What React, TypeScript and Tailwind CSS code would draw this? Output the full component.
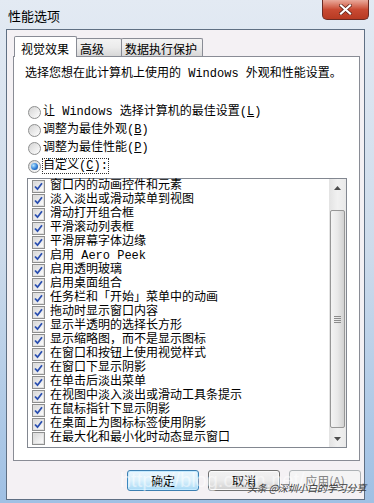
import React from 'react';

const items: [string, boolean][] = [
  ['窗口内的动画控件和元素', true],
  ['淡入淡出或滑动菜单到视图', true],
  ['滑动打开组合框', true],
  ['平滑滚动列表框', true],
  ['平滑屏幕字体边缘', true],
  ['启用 Aero Peek', true],
  ['启用透明玻璃', true],
  ['启用桌面组合', true],
  ['任务栏和「开始」菜单中的动画', true],
  ['拖动时显示窗口内容', true],
  ['显示半透明的选择长方形', true],
  ['显示缩略图，而不是显示图标', true],
  ['在窗口和按钮上使用视觉样式', true],
  ['在窗口下显示阴影', true],
  ['在单击后淡出菜单', true],
  ['在视图中淡入淡出或滑动工具条提示', true],
  ['在鼠标指针下显示阴影', true],
  ['在桌面上为图标标签使用阴影', true],
  ['在最大化和最小化时动态显示窗口', false],
];

function CheckBox({ checked }: { checked: boolean }) {
  return (
    <span className="w-[13px] h-[13px] shrink-0 border border-[#8e8f8f] bg-white flex items-center justify-center">
      <span className="w-[11px] h-[11px] border border-[#e0e0e0] bg-gradient-to-br from-[#d9d9d9] to-[#fbfbfb] flex items-center justify-center">
        {checked && (
          <svg width="9" height="9" viewBox="0 0 9 9">
            <path d="M1 4.5 L3.5 7.2 L8 1.2" fill="none" stroke="#2a4fb0" strokeWidth="1.8" />
          </svg>
        )}
      </span>
    </span>
  );
}

function Radio({ on }: { on?: boolean }) {
  return (
    <span className="w-[13px] h-[13px] shrink-0 rounded-full border border-[#8e8f8f] bg-gradient-to-br from-[#d4d4d4] to-white flex items-center justify-center">
      {on && <span className="w-[7px] h-[7px] rounded-full bg-[radial-gradient(circle_at_35%_35%,#b8e6ff,#2f7fd8_55%,#0d3d86)]" />}
    </span>
  );
}

function Mnemonic({ k }: { k: string }) {
  return (
    <span>
      (<span className="underline">{k}</span>)
    </span>
  );
}

export default function App() {
  return (
    <div className="relative w-[374px] h-[503px] overflow-hidden flex flex-col bg-gradient-to-b from-[#e3eaf3] via-[#cddbeb] to-[#9fc0e4] font-['Liberation_Mono','Noto_Sans_CJK_SC',monospace] text-[12px] leading-[14px] text-black">
      {/* title bar */}
      <div className="h-[29px] flex items-start shrink-0">
        <div className="pl-[8px] pt-[8px] text-[13px] leading-[15px] font-['Noto_Sans_CJK_SC',sans-serif]">性能选项</div>
        <button className="ml-auto mr-[5px] w-[47px] h-[20px] rounded-b-[5px] border border-t-0 border-[#6b2b24] bg-gradient-to-b from-[#e9a99b] via-[#c94a33] to-[#b73a22] flex items-center justify-center">
          <svg width="13" height="11" viewBox="0 0 13 11">
            <path d="M2 1.5 L11 9.5 M11 1.5 L2 9.5" stroke="#5a1e14" strokeWidth="3.6" strokeLinecap="square" />
            <path d="M2 1.5 L11 9.5 M11 1.5 L2 9.5" stroke="#ffffff" strokeWidth="2.2" strokeLinecap="square" />
          </svg>
        </button>
      </div>

      {/* client area */}
      <div className="ml-[6px] mr-[9px] mb-[3px] flex-1 border border-[#5f6f83] bg-[#f4f1f4] flex flex-col">
        {/* tabs */}
        <div className="pt-[6px] pl-[7px] flex items-end relative z-10">
          <div className="w-[63px] h-[21px] -mb-px bg-white border border-b-0 border-[#898c95] rounded-t-[2px] pl-[6px] pt-[5px] font-['Noto_Sans_CJK_SC',sans-serif]">视觉效果</div>
          <div className="w-[46px] h-[18px] -ml-px border border-b-0 border-[#898c95] rounded-t-[2px] bg-gradient-to-b from-[#f3f3f3] via-[#ebebeb] to-[#d7d7d7] pl-[3px] pt-[3px] font-['Noto_Sans_CJK_SC',sans-serif]">高级</div>
          <div className="w-[82px] h-[18px] -ml-px border border-b-0 border-[#898c95] rounded-t-[2px] bg-gradient-to-b from-[#f3f3f3] via-[#ebebeb] to-[#d7d7d7] pl-[3px] pt-[3px] font-['Noto_Sans_CJK_SC',sans-serif]">数据执行保护</div>
        </div>

        {/* tab panel */}
        <div className="ml-[6px] mr-[4px] h-[405px] border border-[#898c95] bg-white flex flex-col">
          <div className="pl-[11px] pt-[10px]">选择您想在此计算机上使用的 Windows 外观和性能设置。</div>

          <div className="mt-[24px] pl-[14px] flex flex-col gap-[4px]">
            <div className="h-[14px] flex items-center gap-[2px]">
              <Radio />
              <span>让 Windows 选择计算机的最佳设置<Mnemonic k="L" /></span>
            </div>
            <div className="h-[14px] flex items-center gap-[2px]">
              <Radio />
              <span>调整为最佳外观<Mnemonic k="B" /></span>
            </div>
            <div className="h-[14px] flex items-center gap-[2px]">
              <Radio />
              <span>调整为最佳性能<Mnemonic k="P" /></span>
            </div>
            <div className="h-[14px] flex items-center gap-[2px]">
              <Radio on />
              <span className="outline outline-1 outline-dotted outline-[#333]">自定义<Mnemonic k="C" />:</span>
            </div>
          </div>

          {/* list */}
          <div className="mt-[5px] ml-[13px] mr-[12px] h-[270px] border border-[#828790] bg-white flex">
            <div className="flex-1 pl-[4px] flex flex-col">
              {items.map(([label, checked], i) => (
                <div key={i} className="h-[14px] flex items-center gap-[5px] shrink-0">
                  <CheckBox checked={checked} />
                  <span className="whitespace-nowrap">{label}</span>
                </div>
              ))}
            </div>
            {/* scrollbar */}
            <div className="w-[17px] flex flex-col bg-gradient-to-r from-[#e3e3e3] via-[#f1f1f1] to-[#e9e9e9]">
              <div className="h-[17px] flex items-center justify-center">
                <svg width="7" height="4" viewBox="0 0 7 4"><path d="M0 4 L3.5 0 L7 4 Z" fill="#4d4d4d" /></svg>
              </div>
              <div className="flex-1 pt-[14px] pb-[2px] px-[1px] flex">
                <div className="flex-1 rounded-[2px] border border-[#979797] bg-gradient-to-r from-[#f4f4f4] via-[#e9e9e9] to-[#d2d2d2] flex items-center justify-center">
                  <div className="w-[7px] flex flex-col gap-[1px]">
                    <div className="h-px bg-[#8c8c8c]" />
                    <div className="h-px bg-[#8c8c8c]" />
                    <div className="h-px bg-[#8c8c8c]" />
                    <div className="h-px bg-[#8c8c8c]" />
                  </div>
                </div>
              </div>
              <div className="h-[17px] flex items-center justify-center">
                <svg width="7" height="4" viewBox="0 0 7 4"><path d="M0 0 L7 0 L3.5 4 Z" fill="#4d4d4d" /></svg>
              </div>
            </div>
          </div>
        </div>

        {/* buttons */}
        <div className="mt-[9px] pr-[3px] flex justify-end gap-[9px] font-['Noto_Sans_CJK_SC',sans-serif]">
          <button className="w-[72px] h-[21px] rounded-[3px] border border-[#3c7fb1] bg-gradient-to-b from-[#eaf6fd] via-[#d9f0fc] to-[#a7d9f5] shadow-[inset_0_0_0_1px_#c4eaff] leading-[14px]">确定</button>
          <button className="w-[72px] h-[21px] rounded-[3px] border border-[#707070] bg-gradient-to-b from-[#f2f2f2] via-[#ebebeb] to-[#cfcfcf] shadow-[inset_0_0_0_1px_#fbfbfb] leading-[14px]">取消</button>
          <button className="w-[72px] h-[21px] rounded-[3px] border border-[#adb2b5] bg-[#f4f4f4] text-[#838383] leading-[14px]">应用<Mnemonic k="A" /></button>
        </div>
      </div>

      {/* watermarks */}
      <div className="absolute left-[120px] top-[469px] text-[20px] leading-[22px] text-white/50 font-['Liberation_Sans',sans-serif] whitespace-nowrap pointer-events-none">https://blog.csdn.net/...</div>
      <div className="absolute left-[247px] top-[482px] text-[10px] leading-[12px] tracking-[-0.2px] text-[#3a3a3a] italic font-['Noto_Sans_CJK_SC',sans-serif] whitespace-nowrap pointer-events-none">头条 @深圳小白的学习分享</div>
    </div>
  );
}
